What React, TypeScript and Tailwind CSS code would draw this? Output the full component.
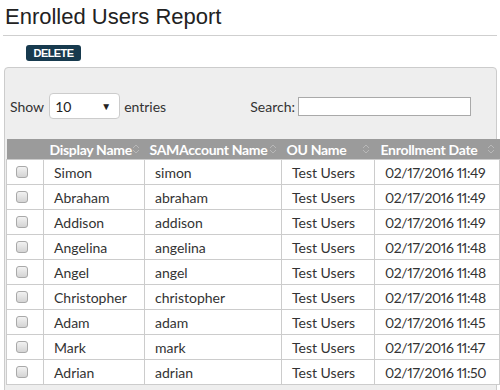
import React from 'react';

interface UserRow {
  display: string;
  sam: string;
  ou: string;
  date: string;
}

const rows: UserRow[] = [
  { display: 'Simon', sam: 'simon', ou: 'Test Users', date: '02/17/2016 11:49' },
  { display: 'Abraham', sam: 'abraham', ou: 'Test Users', date: '02/17/2016 11:49' },
  { display: 'Addison', sam: 'addison', ou: 'Test Users', date: '02/17/2016 11:49' },
  { display: 'Angelina', sam: 'angelina', ou: 'Test Users', date: '02/17/2016 11:48' },
  { display: 'Angel', sam: 'angel', ou: 'Test Users', date: '02/17/2016 11:48' },
  { display: 'Christopher', sam: 'christopher', ou: 'Test Users', date: '02/17/2016 11:48' },
  { display: 'Adam', sam: 'adam', ou: 'Test Users', date: '02/17/2016 11:45' },
  { display: 'Mark', sam: 'mark', ou: 'Test Users', date: '02/17/2016 11:47' },
  { display: 'Adrian', sam: 'adrian', ou: 'Test Users', date: '02/17/2016 11:50' },
];

// up/down sort arrows in the header cells
const SortIcon: React.FC = () => (
  <svg width="8" height="12" viewBox="0 0 8 12" className="shrink-0">
    <path d="M1 5 L4 2 L7 5" fill="none" stroke="#b8b8b8" strokeWidth="1" />
    <path d="M1 7 L4 10 L7 7" fill="none" stroke="#b8b8b8" strokeWidth="1" />
  </svg>
);

const HeadCell: React.FC<{ label: string; width: string; pl: string }> = ({ label, width, pl }) => (
  <th className={`${width} p-0 font-bold text-white text-left`}>
    <div className={`flex items-center justify-between ${pl} pr-[5px] h-[20px]`}>
      <span className="whitespace-nowrap tracking-[-0.3px]">{label}</span>
      <SortIcon />
    </div>
  </th>
);

const Checkbox: React.FC = () => (
  <span className="block w-[12px] h-[12px] rounded-[3px] border border-[#a9a9a9] bg-gradient-to-b from-[#f2f2f2] to-[#d4d4d4]" />
);

export default function App() {
  return (
    <div className="w-[500px] h-[390px] overflow-hidden bg-white font-['Lato',sans-serif] text-[#333]">
      <div className="pt-[4px] pl-[5px] pb-[5px] mx-[3px] border-b border-[#cfcfcf]">
        <h1 className="font-['Liberation_Sans',Arial,sans-serif] text-[22px] leading-[26px] text-[#222] -ml-[3px]">
          Enrolled Users Report
        </h1>
      </div>

      <div className="flex pt-[9px] pl-[26px]">
        <button className="block w-[55px] h-[16px] rounded-[3px] bg-[#173a4e] text-white font-['Liberation_Sans',Arial,sans-serif] font-bold text-[11px] leading-[16px] tracking-[-0.6px] text-center">
          DELETE
        </button>
      </div>

      <div className="mt-[6px] ml-[4px] mr-[3px] h-[340px] rounded-[4px] border border-[#cccccc] bg-[#eeeeee] pt-[25px]">
        <div className="flex items-center justify-between h-[26px] pl-[5px] pr-[25px] text-[14px]">
          <div className="flex items-center">
            <span>Show</span>
            <div className="ml-[5px] w-[71px] h-[26px] rounded-[4px] border border-[#cccccc] bg-white flex items-center justify-between pl-[5px] pr-[8px]">
              <span className="text-[#222]">10</span>
              <span className="text-[10px] text-[#222]">▼</span>
            </div>
            <span className="ml-[4px]">entries</span>
          </div>
          <div className="flex items-center">
            <span>Search:</span>
            <div className="ml-[3px] w-[173px] h-[19px] border border-[#a9a9a9] bg-white" />
          </div>
        </div>

        <table className="mt-[20px] ml-[1px] w-[493px] border-collapse table-fixed text-[14px] proportional-nums">
          <thead>
            <tr className="bg-[#9b9b9b]">
              <th className="w-[37px] p-0" />
              <HeadCell label="Display Name" width="w-[101px]" pl="pl-[6px]" />
              <HeadCell label="SAMAccount Name" width="w-[137px]" pl="pl-[5px]" />
              <HeadCell label="OU Name" width="w-[93px]" pl="pl-[5px]" />
              <HeadCell label="Enrollment Date" width="w-[125px]" pl="pl-[6px]" />
            </tr>
          </thead>
          <tbody>
            {rows.map((r) => (
              <tr key={r.sam} className="bg-white h-[25px]">
                <td className="border border-[#cccccc] p-0 pl-[9px]">
                  <Checkbox />
                </td>
                <td className="border border-[#cccccc] p-0 pl-[10px] whitespace-nowrap">{r.display}</td>
                <td className="border border-[#cccccc] p-0 pl-[10px] whitespace-nowrap">{r.sam}</td>
                <td className="border border-[#cccccc] p-0 pl-[10px] whitespace-nowrap">{r.ou}</td>
                <td className="border border-[#cccccc] p-0 pl-[10px] whitespace-nowrap tracking-[-0.4px]">{r.date}</td>
              </tr>
            ))}
          </tbody>
        </table>
      </div>
    </div>
  );
}
